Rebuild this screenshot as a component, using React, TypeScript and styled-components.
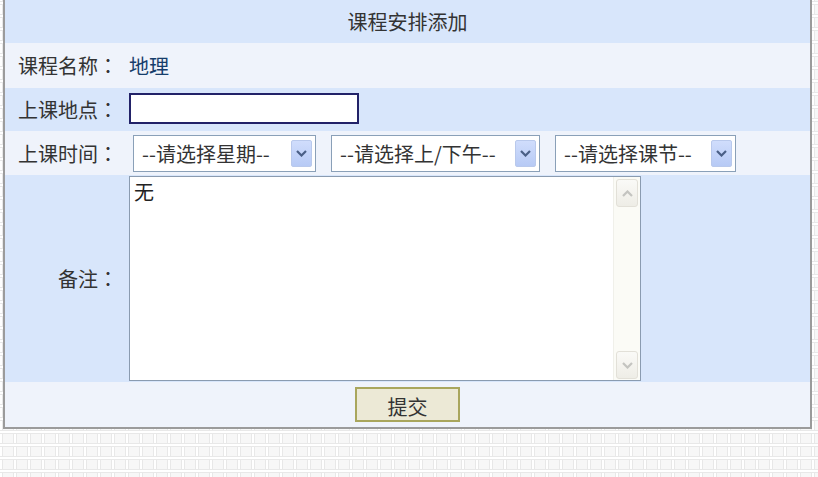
import styled, { createGlobalStyle } from "styled-components";

const GlobalStyle = createGlobalStyle`
  html, body {
    margin: 0;
    padding: 0;
  }
  body {
    width: 818px;
    height: 477px;
    overflow: hidden;
    font-family: "Noto Sans CJK SC", "Noto Sans", sans-serif;
    background-color: #f7f7f7;
    background-image:
      linear-gradient(to bottom, #fff 0 2px, #e8e8e8 2px 3px, transparent 3px calc(100% - 1px), #e8e8e8 calc(100% - 1px)),
      linear-gradient(to right, #fff 0 2px, #e8e8e8 2px 3px, transparent 3px calc(100% - 1px), #e8e8e8 calc(100% - 1px));
    background-size: 14px 13px;
    background-position: 0 2px;
  }
`;

const Page = styled.div`
  padding-left: 3px;
`;

const FormTable = styled.table`
  width: 809px;
  border-collapse: separate;
  border-spacing: 0;
  border: 2px solid #9b9b9b;
  border-top: none;
  font-size: 20px;
  color: #333;

  td,
  th {
    padding: 0;
  }
`;

const Row = styled.tr<{ $tone: "blue" | "pale"; $h: number }>`
  height: ${(p) => p.$h}px;
  background: ${(p) => (p.$tone === "blue" ? "#d8e6fb" : "#eff3fb")};
`;

const HeaderCell = styled.th`
  font-weight: normal;
  text-align: center;
  vertical-align: middle;
  color: #333;
`;

const LabelCell = styled.td`
  width: 113px;
  padding-right: 10px !important;
  text-align: right;
  vertical-align: middle;
  white-space: nowrap;
`;

// full-width colon drawn centred in its box, as in the original
const Colon = styled.span`
  font-family: "Noto Sans CJK JP", "Noto Sans CJK SC", sans-serif;
`;

const ValueCell = styled.td<{ $pad?: string }>`
  vertical-align: middle;
  padding: ${(p) => p.$pad ?? "0 0 0 1px"} !important;
`;

const CourseName = styled.span`
  color: #163d6b;
`;

const TextInput = styled.input`
  display: block;
  box-sizing: border-box;
  width: 230px;
  height: 31px;
  margin-top: -3px;
  border: 2px solid #222268;
  background: #fff;
  outline: none;
`;

const SelectRow = styled.div`
  display: flex;
  gap: 15px;
  padding-left: 4px;
`;

const SelectBox = styled.div<{ $w: number }>`
  box-sizing: border-box;
  width: ${(p) => p.$w}px;
  height: 37px;
  display: flex;
  align-items: center;
  justify-content: space-between;
  padding: 0 3px 0 8px;
  border: 1px solid #8aa0b8;
  background: #fff;
  font-size: 20px;
  color: #333;
  white-space: nowrap;
`;

const ArrowButton = styled.span`
  box-sizing: border-box;
  width: 21px;
  height: 27px;
  display: flex;
  align-items: center;
  justify-content: center;
  border: 1px solid #b9c9ec;
  border-radius: 2px;
  background: linear-gradient(#d0ddfc, #b7caf5);
`;

const TextFrame = styled.div`
  box-sizing: border-box;
  width: 512px;
  height: 205px;
  display: flex;
  border: 1px solid #8a9bb0;
  background: #fff;
`;

const Memo = styled.textarea`
  flex: 1;
  border: none;
  outline: none;
  resize: none;
  padding: 3px 4px;
  font-family: "Noto Sans CJK SC", "Noto Sans", sans-serif;
  font-size: 20px;
  line-height: 24px;
  color: #222;
  background: transparent;
  overflow: hidden;
`;

const ScrollTrack = styled.div`
  box-sizing: border-box;
  width: 27px;
  display: flex;
  flex-direction: column;
  justify-content: space-between;
  padding: 2px 2px 1px 2px;
  background: #fbfbf6;
  border-left: 1px solid #f0f0ea;
`;

const ScrollButton = styled.span`
  box-sizing: border-box;
  height: 28px;
  display: flex;
  align-items: center;
  justify-content: center;
  border: 1px solid #e2e0d8;
  border-radius: 3px;
  background: linear-gradient(#fafaf7, #eeede6);
`;

const ButtonCell = styled.td`
  text-align: center;
  vertical-align: middle;
`;

const SubmitButton = styled.button`
  box-sizing: border-box;
  width: 105px;
  height: 35px;
  padding: 5px 0 0;
  border: 2px solid #a9a65d;
  background: #ece9d6;
  font-family: "Noto Sans CJK SC", "Noto Sans", sans-serif;
  font-size: 20px;
  line-height: 26px;
  color: #333;
`;

function Chevron({ up, color }: { up?: boolean; color: string }) {
  return (
    <svg width="11" height="7" viewBox="0 0 11 7">
      <polyline
        points={up ? "1,6 5.5,1.5 10,6" : "1,1 5.5,5.5 10,1"}
        fill="none"
        stroke={color}
        strokeWidth="2.2"
      />
    </svg>
  );
}

function FakeSelect({ label, width }: { label: string; width: number }) {
  return (
    <SelectBox $w={width}>
      <span>{label}</span>
      <ArrowButton>
        <Chevron color="#4a5f86" />
      </ArrowButton>
    </SelectBox>
  );
}

function Label({ text }: { text: string }) {
  return (
    <LabelCell>
      {text}
      <Colon>：</Colon>
    </LabelCell>
  );
}

export default function App() {
  return (
    <>
      <GlobalStyle />
      <Page>
        <FormTable>
          <tbody>
            <Row $tone="blue" $h={43}>
              <HeaderCell colSpan={2}>课程安排添加</HeaderCell>
            </Row>
            <Row $tone="pale" $h={45}>
              <Label text="课程名称" />
              <ValueCell>
                <CourseName>地理</CourseName>
              </ValueCell>
            </Row>
            <Row $tone="blue" $h={43}>
              <Label text="上课地点" />
              <ValueCell>
                <TextInput type="text" />
              </ValueCell>
            </Row>
            <Row $tone="pale" $h={44}>
              <Label text="上课时间" />
              <ValueCell>
                <SelectRow>
                  <FakeSelect label="--请选择星期--" width={183} />
                  <FakeSelect label="--请选择上/下午--" width={209} />
                  <FakeSelect label="--请选择课节--" width={181} />
                </SelectRow>
              </ValueCell>
            </Row>
            <Row $tone="blue" $h={207}>
              <Label text="备注" />
              <ValueCell $pad="1px 0 1px 1px">
                <TextFrame>
                  <Memo defaultValue="无" />
                  <ScrollTrack>
                    <ScrollButton>
                      <Chevron up color="#c4c4c0" />
                    </ScrollButton>
                    <ScrollButton>
                      <Chevron color="#c4c4c0" />
                    </ScrollButton>
                  </ScrollTrack>
                </TextFrame>
              </ValueCell>
            </Row>
            <Row $tone="pale" $h={45}>
              <ButtonCell colSpan={2}>
                <SubmitButton type="button">提交</SubmitButton>
              </ButtonCell>
            </Row>
          </tbody>
        </FormTable>
      </Page>
    </>
  );
}
